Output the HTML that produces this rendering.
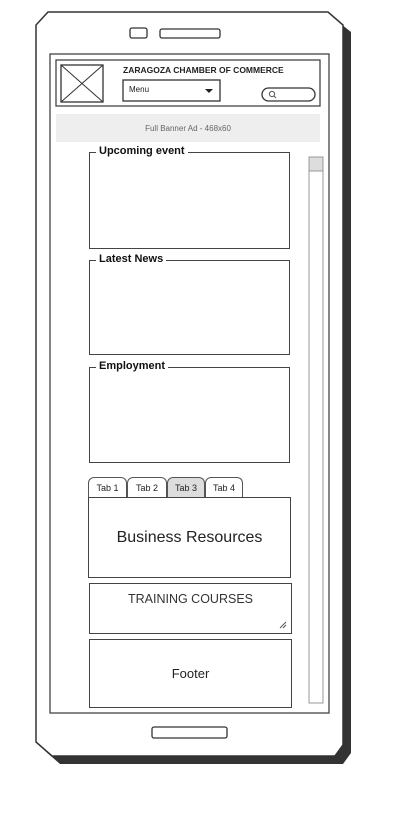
<!DOCTYPE html>
<html><head><meta charset="utf-8"><style>
body{margin:0;width:400px;height:836px;background:#fff;position:relative;overflow:hidden;font-family:"Liberation Sans",sans-serif;color:#222}
.a{position:absolute;box-sizing:border-box}
.b{border:1.3px solid #444;background:#fff}
.leg{position:absolute;top:-8px;left:6px;background:#fff;padding:0 3px;font-weight:bold;font-size:11px;color:#111}
.tab{position:absolute;top:477px;height:21px;border:1.3px solid #555;border-bottom:none;border-radius:6px 6px 0 0;font-size:9px;text-align:center;line-height:20px;background:#fff;box-sizing:border-box}
</style></head><body>
<svg class="a" style="left:0;top:0" width="400" height="836">
<polygon points="56,20 336,20 351,32 351,753 343,764 60,764 44,750 44,30" fill="#333"/>
<polygon points="48,12 328,12 343,25 343,745 335,756 52,756 36,742 36,25" fill="#fff" stroke="#333" stroke-width="1.5"/>
<rect x="50" y="54" width="279" height="659" fill="#fff" stroke="#444" stroke-width="1.3"/>
<rect x="130" y="28" width="17" height="10" rx="2" fill="#fff" stroke="#333" stroke-width="1.3"/>
<rect x="160" y="29" width="60" height="9" rx="2" fill="#fff" stroke="#333" stroke-width="1.3"/>
<rect x="152" y="727" width="75" height="11" rx="2" fill="#fff" stroke="#333" stroke-width="1.3"/>
<rect x="56" y="60" width="264" height="46" fill="#fff" stroke="#444" stroke-width="1.3"/>
<rect x="61" y="65" width="42" height="37" fill="#fff" stroke="#333" stroke-width="1.3"/>
<line x1="61" y1="65" x2="103" y2="102" stroke="#333"/><line x1="103" y1="65" x2="61" y2="102" stroke="#333"/>
<rect x="123" y="80" width="97" height="21" fill="#fff" stroke="#333" stroke-width="1.3"/>
<polygon points="205,89 213,89 209,93" fill="#222"/>
<rect x="262" y="88" width="53" height="13" rx="6.5" fill="#fff" stroke="#333" stroke-width="1.3"/>
<circle cx="272" cy="94" r="2.6" fill="none" stroke="#555"/><line x1="274" y1="96" x2="276" y2="98" stroke="#555"/>
<rect x="56" y="114" width="264" height="28" fill="#eee"/>
<rect x="309" y="157" width="14" height="546" fill="#fff" stroke="#999"/>
<rect x="309" y="157" width="14" height="14" fill="#ddd" stroke="#999"/>
</svg>
<div class="a" style="left:123px;top:65px;font-size:8.5px;font-weight:bold">ZARAGOZA CHAMBER OF COMMERCE</div>
<div class="a" style="left:129px;top:85px;font-size:8px">Menu</div>
<div class="a" style="left:56px;top:124px;width:264px;text-align:center;font-size:8px;color:#666">Full Banner Ad - 468x60</div>
<div class="a b" style="left:89px;top:152px;width:201px;height:97px"><span class="leg">Upcoming event</span></div>
<div class="a b" style="left:89px;top:260px;width:201px;height:95px"><span class="leg">Latest News</span></div>
<div class="a b" style="left:89px;top:367px;width:201px;height:96px"><span class="leg">Employment</span></div>
<div class="tab" style="left:88px;width:39px">Tab 1</div>
<div class="tab" style="left:127px;width:40px">Tab 2</div>
<div class="tab" style="left:167px;width:38px;background:#ddd">Tab 3</div>
<div class="tab" style="left:205px;width:38px">Tab 4</div>
<div class="a b" style="left:88px;top:497px;width:203px;height:81px;text-align:center;font-size:16px;line-height:80px">Business Resources</div>
<div class="a b" style="left:89px;top:583px;width:203px;height:51px;text-align:center;font-size:12.5px;padding-top:8px;color:#333">TRAINING COURSES
<svg class="a" style="right:4px;bottom:4px" width="8" height="8"><line x1="1" y1="7" x2="7" y2="1" stroke="#555"/><line x1="4" y1="7" x2="7" y2="4" stroke="#555"/></svg></div>
<div class="a b" style="left:89px;top:639px;width:203px;height:69px;text-align:center;font-size:13px;line-height:68px">Footer</div>
</body></html>
